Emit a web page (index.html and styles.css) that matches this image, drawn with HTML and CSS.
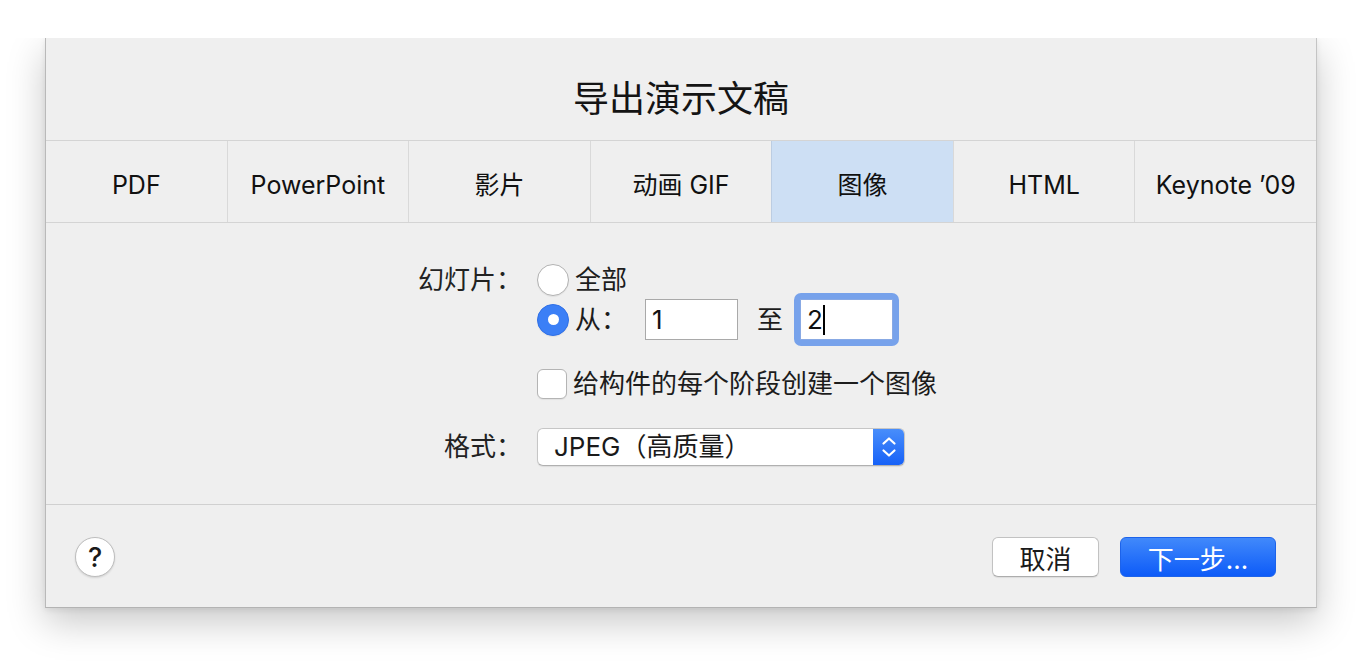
FILE: index.html
```html
<!DOCTYPE html>
<html lang="zh-CN">
<head>
<meta charset="utf-8">
<title>导出演示文稿</title>
<link rel="stylesheet" href="styles.css">
</head>
<body>
<div class="dialog">
  <div class="title">导出演示文稿</div>
  <div class="tabs">
    <div class="tab">PDF</div>
    <div class="tab">PowerPoint</div>
    <div class="tab">影片</div>
    <div class="tab">动画 GIF</div>
    <div class="tab selected">图像</div>
    <div class="tab">HTML</div>
    <div class="tab">Keynote ’09</div>
  </div>
  <div class="content">
    <div class="row">
      <div class="label label-top">幻灯片：</div>
      <div class="controls">
        <div class="line line1">
          <span class="radio"></span>
          <span class="text">全部</span>
        </div>
        <div class="line line2">
          <span class="radio checked"></span>
          <span class="text from">从：</span>
          <span class="field">1</span>
          <span class="text to">至</span>
          <span class="ring"><span class="field focused">2<span class="caret"></span></span></span>
        </div>
      </div>
    </div>
    <div class="row row-check">
      <div class="label"></div>
      <div class="controls">
        <div class="line">
          <span class="checkbox"></span>
          <span class="text">给构件的每个阶段创建一个图像</span>
        </div>
      </div>
    </div>
    <div class="row row-format">
      <div class="label">格式：</div>
      <div class="controls">
        <div class="popup">
          <span class="popup-text">JPEG（高质量）</span>
          <span class="stepper">
            <svg width="32" height="38" viewBox="0 0 32 38">
              <path d="M10.5 15.5 L16 10.5 L21.5 15.5" fill="none" stroke="#fff" stroke-width="2.2" stroke-linecap="round" stroke-linejoin="round"/>
              <path d="M10.5 22.5 L16 27.5 L21.5 22.5" fill="none" stroke="#fff" stroke-width="2.2" stroke-linecap="round" stroke-linejoin="round"/>
            </svg>
          </span>
        </div>
      </div>
    </div>
  </div>
  <div class="footer">
    <div class="help">?</div>
    <div class="buttons">
      <div class="btn cancel">取消</div>
      <div class="btn primary">下一步…</div>
    </div>
  </div>
</div>
</body>
</html>
```

FILE: styles.css
```css
* { box-sizing: border-box; }
html, body {
  margin: 0;
  padding: 0;
  background: #ffffff;
}
body {
  width: 1362px;
  height: 662px;
  overflow: hidden;
  font-family: Inter, "Noto Sans CJK SC", sans-serif;
  color: #1b1b1b;
}
.dialog {
  margin: 38px 0 0 45px;
  width: 1272px;
  background: #efefef;
  border-left: 1px solid #b9b9b9;
  border-right: 1px solid #c4c4c4;
  border-bottom: 1px solid #b3b3b3;
  box-shadow: 0 14px 36px rgba(0, 0, 0, 0.22), 0 2px 6px rgba(0,0,0,0.08);
  clip-path: inset(0 -80px -80px -80px);
}
.title {
  height: 102px;
  padding-top: 14px;
  display: flex;
  align-items: center;
  justify-content: center;
  font-size: 36px;
  font-family: "Noto Sans CJK SC", sans-serif;
  color: #141414;
}
.tabs {
  display: flex;
  height: 83px;
  border-top: 1px solid #d4d4d4;
  border-bottom: 1px solid #d4d4d4;
}
.tab {
  flex: 1;
  display: flex;
  align-items: center;
  justify-content: center;
  font-size: 25px;
  line-height: 32px;
  padding-top: 6px;
  color: #111;
  border-left: 1px solid #d9d9d9;
}
.tab:first-child { border-left: none; }
.tab.selected {
  background: #cddff4;
  border-left-color: #bccde2;
}
.content {
  padding: 41px 0 38px 0;
  font-size: 26px;
}
.row {
  display: flex;
}
.label {
  width: 491px;
  text-align: right;
  padding-right: 15px;
  flex: none;
  line-height: 32px;
  color: #222;
}
.controls {
  display: flex;
  flex-direction: column;
}
.line {
  display: flex;
  align-items: center;
  height: 32px;
}
.line2 {
  margin-top: 3px;
  height: 41px;
}
.radio {
  width: 32px;
  height: 32px;
  border-radius: 50%;
  background: #fff;
  border: 1px solid #b2b2b2;
  box-shadow: 0 1px 1px rgba(0,0,0,0.06);
  flex: none;
  position: relative;
}
.radio.checked {
  background: #3b7ff6;
  border-color: #2f6fe6;
}
.radio.checked::after {
  content: "";
  position: absolute;
  left: 50%;
  top: 50%;
  width: 11px;
  height: 11px;
  margin: -5.5px 0 0 -5.5px;
  border-radius: 50%;
  background: #fff;
}
.text {
  margin-left: 6px;
  color: #1c1c1c;
  line-height: 32px;
}
.from { width: 52px; margin-right: 18px; }
.to { margin-left: 19px; margin-right: 11px; }
.field {
  display: flex;
  align-items: center;
  width: 93px;
  height: 41px;
  background: #fff;
  border: 1px solid #a9a9a9;
  padding-left: 6px;
  color: #111;
}
.ring {
  display: flex;
  padding: 6px;
  border-radius: 7px;
  background: #77a2eb;
}
.field.focused {
  width: 93px;
  height: 41px;
  border-color: #88a9e4;
}
.caret {
  display: inline-block;
  width: 2px;
  height: 30px;
  background: #000;
  margin-left: 0px;
}
.row-check { margin-top: 28px; }
.checkbox {
  width: 30px;
  height: 30px;
  border-radius: 6px;
  background: #fff;
  border: 1px solid #b4b4b4;
  box-shadow: 0 1px 1px rgba(0,0,0,0.06);
  flex: none;
}
.row-format { margin-top: 28px; align-items: center; }
.row-format .label { line-height: 38px; }
.popup {
  display: flex;
  width: 368px;
  height: 38px;
  background: #fff;
  border: 1px solid #c6c6c6;
  border-bottom-color: #b0b0b0;
  border-radius: 6px;
  box-shadow: 0 1px 1px rgba(0,0,0,0.08);
  overflow: hidden;
}
.popup-text {
  flex: 1;
  padding-left: 16px;
  line-height: 36px;
  color: #1a1a1a;
}
.stepper {
  width: 32px;
  height: 38px;
  margin-top: -1px;
  margin-right: -1px;
  background: linear-gradient(#4a8ffb, #1560f7);
  display: flex;
}
.footer {
  border-top: 1px solid #d0d0d0;
  height: 103px;
  padding: 32px 40px 0 29px;
  display: flex;
  justify-content: space-between;
  align-items: flex-start;
}
.help {
  width: 40px;
  height: 40px;
  border-radius: 50%;
  background: #fff;
  border: 1px solid #bdbdbd;
  box-shadow: 0 1px 2px rgba(0,0,0,0.12);
  display: flex;
  align-items: center;
  justify-content: center;
  font-size: 27px;
  font-weight: 500;
  color: #1a1a1a;
}
.buttons {
  display: flex;
  gap: 21px;
}
.btn {
  height: 40px;
  border-radius: 6px;
  display: flex;
  align-items: center;
  justify-content: center;
  font-size: 26px;
}
.cancel {
  width: 107px;
  background: #fff;
  border: 1px solid #c2c2c2;
  border-bottom-color: #adadad;
  box-shadow: 0 1px 1px rgba(0,0,0,0.08);
  color: #1a1a1a;
}
.primary {
  width: 156px;
  background: linear-gradient(#4189fb, #0d5bf8);
  border: 1px solid #1d63ea;
  color: #fff;
}
```
